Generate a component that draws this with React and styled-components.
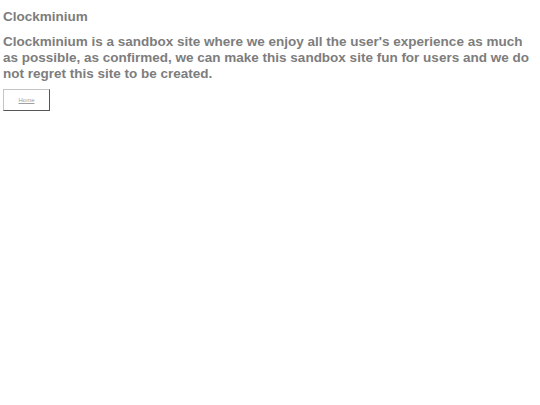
import React from "react";
import styled, { createGlobalStyle } from "styled-components";

const Global = createGlobalStyle`
  html, body {
    margin: 0;
    padding: 0;
    background: #ffffff;
  }
  body {
    font-family: "Liberation Sans", Arial, sans-serif;
    color: #7d7d7d;
  }
`;

const Page = styled.div`
  padding: 9px 3px;
`;

const Title = styled.h1`
  margin: 0 0 10px;
  font-size: 13.5px;
  font-weight: bold;
`;

const Intro = styled.p`
  margin: 0 0 8px;
  font-size: 13.5px;
  line-height: 15.75px;
  font-weight: bold;
`;

const NavButton = styled.a`
  display: flex;
  align-items: center;
  justify-content: center;
  width: 45px;
  height: 20px;
  border: 1px solid #c4c4c4;
  border-right-color: #555;
  border-bottom-color: #555;
  font-size: 6px;
  color: #a0a0a0;
  text-decoration: underline;
`;

export default function App() {
  return (
    <>
      <Global />
      <Page>
        <Title>Clockminium</Title>
        <Intro>
          Clockminium is a sandbox site where we enjoy all the user's experience as much
          as possible, as confirmed, we can make this sandbox site fun for users and we do
          not regret this site to be created.
        </Intro>
        <NavButton href="#">Home</NavButton>
      </Page>
    </>
  );
}
